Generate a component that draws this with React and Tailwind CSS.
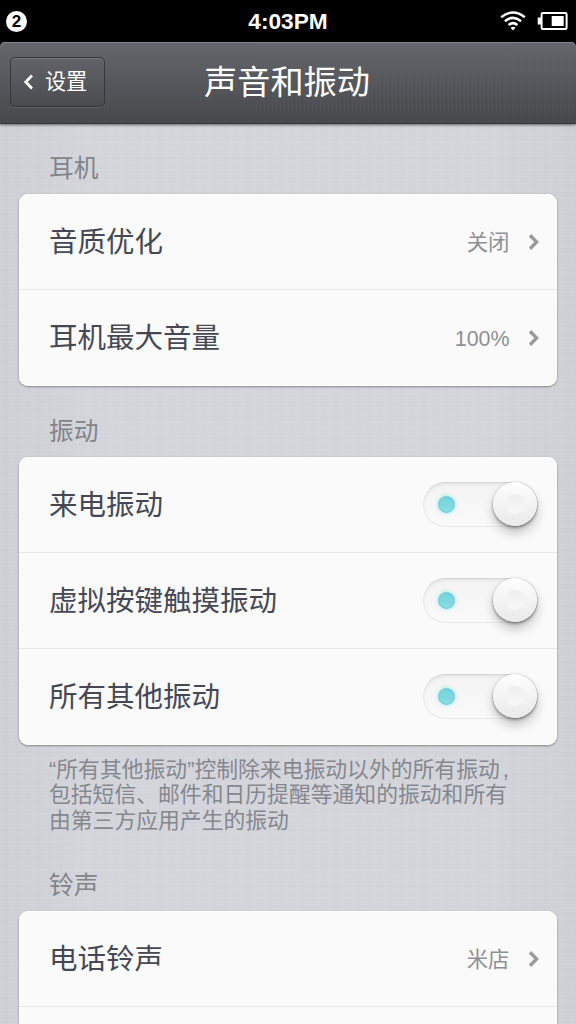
const FONT = "font-['Liberation_Sans','Noto_Sans_CJK_SC',sans-serif]";
const CJK = "font-['Noto_Sans_CJK_SC',sans-serif]";

function Chevron() {
  return (
    <svg width="12" height="18" viewBox="0 0 12 18" fill="none" className="ml-[18px] shrink-0">
      <path d="M2 2.2 8.6 9 2 15.8" stroke="#9b9b9d" strokeWidth="3.4" />
    </svg>
  );
}

function Toggle() {
  return (
    <div className="flex h-[45px] w-[115px] items-center justify-between rounded-full border border-[#e8e8e9] border-t-[#d3d3d4] bg-linear-to-b from-[#f3f3f3] to-[#fafafa] pl-[14px] shadow-[inset_0_2px_3px_rgba(0,0,0,0.05)]">
      <div className="size-[17px] rounded-full border border-[#67c9d1] bg-linear-to-b from-[#74d3db] to-[#88dee4] shadow-[0_0_4px_rgba(100,225,232,0.7)]" />
      <div className="flex size-[44px] items-center justify-center rounded-full bg-linear-to-b from-[#fefefe] to-[#e9e9e9] shadow-[0_0_1px_0.5px_rgba(0,0,0,0.12),0_2px_3px_rgba(0,0,0,0.33),0_7px_11px_rgba(0,0,0,0.22)]">
        <div className="size-[20px] rounded-full bg-linear-to-b from-[#eeeeee] to-[#f8f8f8]" />
      </div>
    </div>
  );
}

function Row({ title, value, toggle }) {
  return (
    <div className="flex h-[96px] shrink-0 items-center justify-between pl-[30px] pr-[17px] shadow-[inset_0_-1px_0_#e8e8ea] last:shadow-none">
      <span className={`${CJK} pb-[3px] text-[28.5px] leading-none text-[#454854]`}>{title}</span>
      {toggle ? (
        <div className="mr-[2px] pb-[2px]">
          <Toggle />
        </div>
      ) : (
        <div className="flex items-center">
          <span className={`${FONT} pt-[3px] text-[21.4px] leading-none text-[#8d8f94]`}>{value}</span>
          <Chevron />
        </div>
      )}
    </div>
  );
}

function Card({ children }) {
  return (
    <div className="ml-[19px] mr-[19.5px] flex flex-col rounded-[9px] bg-[#fafafa] shadow-[inset_0_1px_0_#fff,inset_0_-1px_0_#fff,0_1px_2px_rgba(0,0,0,0.36),0_0_1px_rgba(0,0,0,0.15)]">
      {children}
    </div>
  );
}

function Label({ children }) {
  return <h2 className={`${CJK} pl-[49px] text-[24.7px] leading-[32px] text-[#82848a]`}>{children}</h2>;
}

export default function App() {
  return (
    <div className="flex h-[1024px] w-[576px] flex-col overflow-hidden bg-black">
      <div className={`${FONT} grid h-[42px] shrink-0 grid-cols-3 items-center pl-[6px] pr-[8px] text-white`}>
        <div className="flex size-[21px] items-center justify-center rounded-full bg-white text-[17px] font-bold leading-none text-black">
          2
        </div>
        <div className="whitespace-nowrap pl-[2px] text-center text-[22.7px] font-bold leading-none">4:03PM</div>
        <div className="flex items-center justify-end gap-[11px]">
          <svg width="26" height="20" viewBox="0 0 26 20" fill="none" stroke="white" strokeWidth="2.5">
            <path d="M1.2 6.2Q13-3.2 24.8 6.2M4.9 10.2Q13 3.6 21.1 10.2M8.6 14Q13 10.3 17.4 14" />
            <path d="M10.5 16.7Q13 15 15.5 16.7L13 19.6Z" fill="white" stroke="none" />
          </svg>
          <svg width="31" height="18" viewBox="0 0 31 18" fill="none">
            <rect x="4.6" y="1" width="25" height="16" rx="1.2" stroke="white" strokeWidth="2" />
            <path d="M.7 5.5h4v7h-4zM14.7 4h12v10h-12z" fill="white" />
          </svg>
        </div>
      </div>

      <div className="flex min-h-0 flex-1 flex-col bg-[repeating-linear-gradient(90deg,rgba(255,255,255,0.04)_0_1px,transparent_1px_5px,rgba(70,70,95,0.008)_5px_7px,transparent_7px_11px),repeating-linear-gradient(0deg,rgba(255,255,255,0.04)_0_1px,transparent_1px_4px,rgba(70,70,95,0.008)_4px_6px,transparent_6px_7px),linear-gradient(90deg,#cfd0d6,#d4d5db_15%,#d4d5db_85%,#cfd0d6)]">
        <div className="bg-black">
          <header
            className={`${CJK} relative grid h-[82px] grid-cols-[1fr_auto_1fr] items-center rounded-t-[5px] border-b border-[#37383b] bg-[repeating-linear-gradient(90deg,rgba(255,255,255,0.01)_0_1px,transparent_1px_4px),linear-gradient(#64666c,#47484c)] px-[10px] text-white shadow-[inset_0_1px_0_#85868a,0_1px_3px_rgba(0,0,0,0.55)]`}
          >
            <button className="mb-px flex h-[50px] w-[95px] items-center rounded-[5px] border border-[#36373b] bg-linear-to-b from-[#616369] to-[#4b4c50] pl-[12px] shadow-[inset_0_1px_0_rgba(255,255,255,0.13),0_1px_0_rgba(255,255,255,0.1)]">
              <svg width="11" height="16" viewBox="0 0 11 16" fill="none">
                <path d="M9 1.5 2.7 8 9 14.5" stroke="white" strokeWidth="2.7" />
              </svg>
              <span className="ml-[11px] pb-[2px] text-[21.1px] leading-none">设置</span>
            </button>
            <h1 className="pb-[6px] pr-[2px] text-[33.2px] leading-none">声音和振动</h1>
            <span />
          </header>
        </div>

        <main className="flex flex-col">
          <div className="pb-[12px] pt-[26px]">
            <Label>耳机</Label>
          </div>
          <Card>
            <Row title="音质优化" value="关闭" />
            <Row title="耳机最大音量" value="100%" />
          </Card>
          <div className="pb-[12px] pt-[27px]">
            <Label>振动</Label>
          </div>
          <Card>
            <Row title="来电振动" toggle />
            <Row title="虚拟按键触摸振动" toggle />
            <Row title="所有其他振动" toggle />
          </Card>
          <p className={`${FONT} whitespace-nowrap pl-[49px] pt-[11.5px] text-[21.82px] leading-[25.6px] text-[#85878e]`}>
            “所有其他振动”控制除来电振动以外的所有振动<span className="ml-[3px]">,</span>
            <br />
            包括短信、邮件和日历提醒等通知的振动和所有
            <br />
            由第三方应用产生的振动
          </p>
          <div className="pb-[12px] pt-[33.7px]">
            <Label>铃声</Label>
          </div>
          <Card>
            <Row title="电话铃声" value="米店" />
            <div className="h-[96px] shrink-0" />
          </Card>
        </main>
      </div>
    </div>
  );
}
